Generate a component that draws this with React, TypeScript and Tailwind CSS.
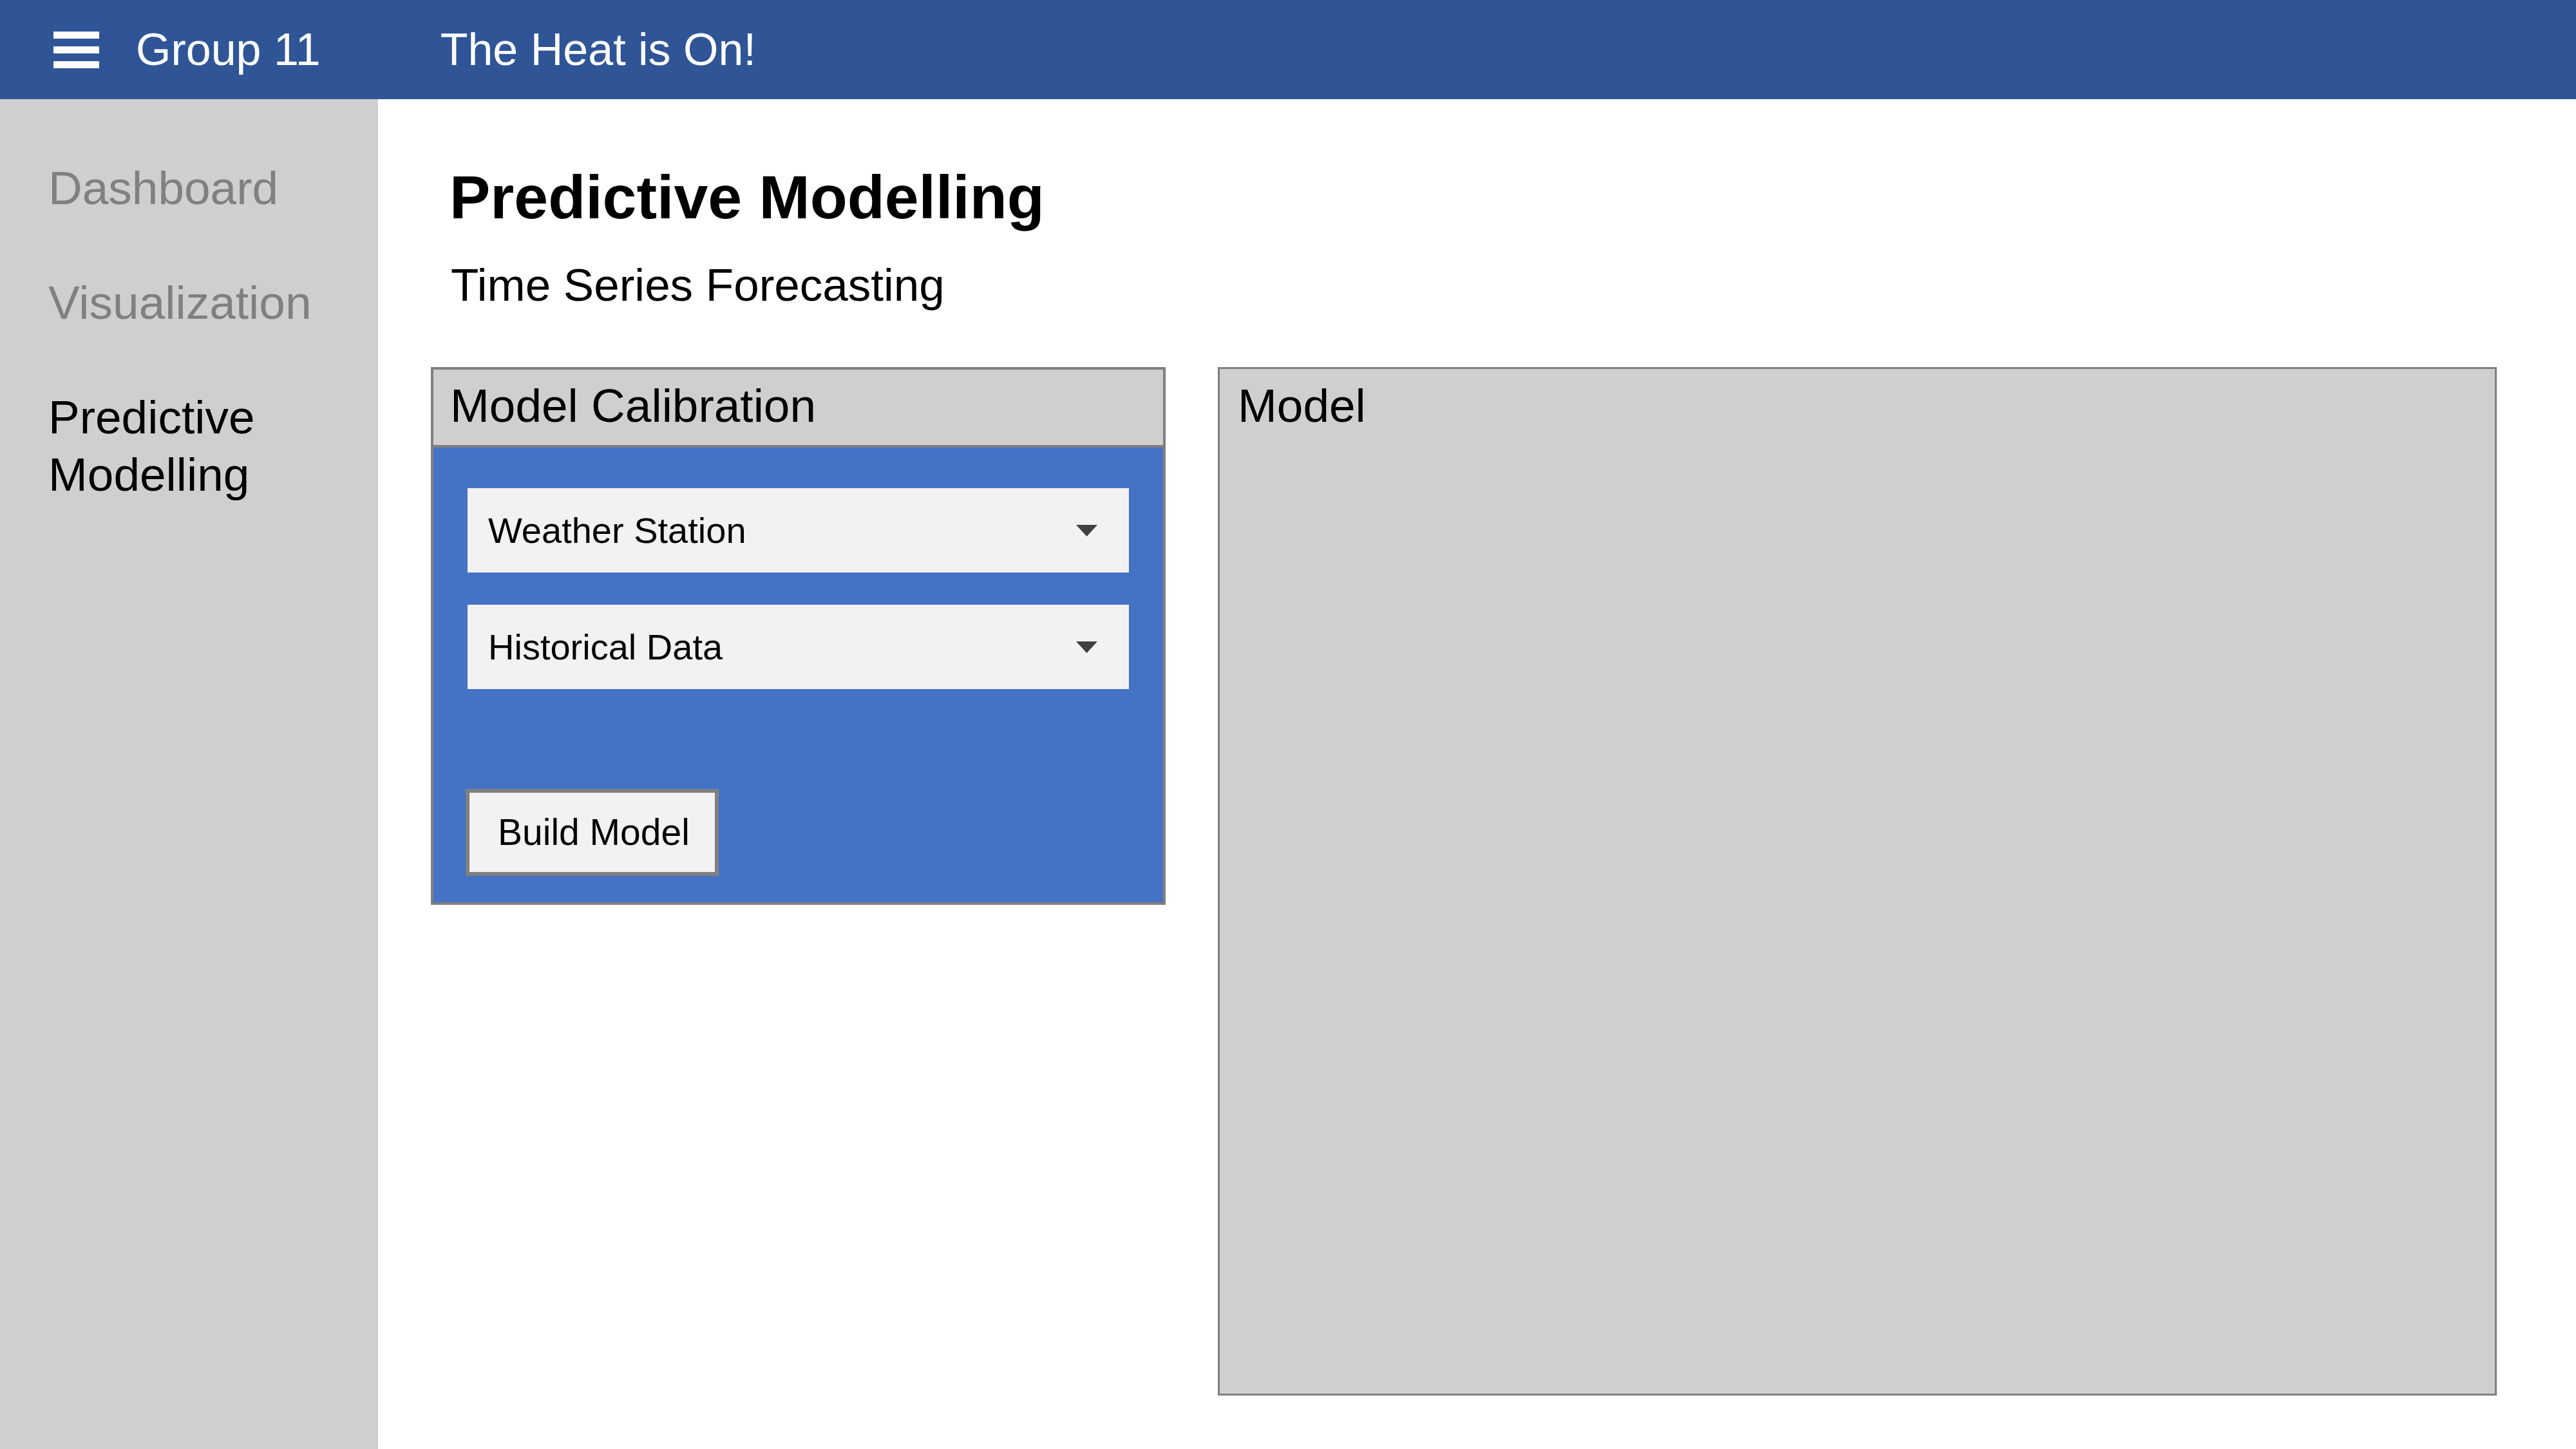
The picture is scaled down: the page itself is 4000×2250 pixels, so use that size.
import React from "react";

const navItems = [
  { label: "Dashboard", active: false },
  { label: "Visualization", active: false },
  { label: "Predictive Modelling", active: true },
];

const Dropdown = ({ label }: { label: string }) => (
  <div className="flex h-[131px] items-center justify-between bg-[#f2f2f2] pl-[32px] pr-[49px] text-[56px] text-black">
    <span>{label}</span>
    <svg width="33" height="18" viewBox="0 0 33 18">
      <polygon points="0,0 33,0 16.5,18" fill="#404040" />
    </svg>
  </div>
);

const App = () => {
  return (
    <div className="flex h-[2250px] w-[4000px] flex-col font-['Liberation_Sans',Arial,sans-serif]">
      <header className="flex h-[154px] shrink-0 items-center bg-[#2f5597] text-[70px] text-white">
        <div className="ml-[83px] flex w-[71px] flex-col gap-[12px]">
          <span className="h-[11px] bg-white" />
          <span className="h-[11px] bg-white" />
          <span className="h-[11px] bg-white" />
        </div>
        <span className="ml-[57px]">Group 11</span>
        <span className="ml-[186px]">The Heat is On!</span>
      </header>

      <div className="flex flex-1">
        <aside className="flex w-[587px] shrink-0 flex-col gap-[89px] bg-[#d0cece] pl-[75px] pt-[93px] text-[73px] leading-[89px]">
          {navItems.map((item, index) => (
            <div key={index} className={item.active ? "text-black" : "text-[#808080]"}>
              {item.label === "Predictive Modelling" ? (
                <>
                  Predictive
                  <br />
                  Modelling
                </>
              ) : (
                item.label
              )}
            </div>
          ))}
        </aside>

        <main className="flex flex-1 flex-col bg-white pl-[82px] pt-[96px]">
          <h1 className="pl-[29px] text-[95px] font-bold leading-[113px] text-black">Predictive Modelling</h1>
          <p className="mt-[38px] pl-[31px] text-[71px] leading-[84px] text-black">Time Series Forecasting</p>

          <div className="mt-[85px] flex items-start gap-[81px] pr-[123px]">
            <section className="w-[1141px] shrink-0 border-[4px] border-[#7f7f7f]">
              <div className="h-[121px] border-b-[4px] border-[#7f7f7f] bg-[#d0cece] pl-[26px] pt-[13px] text-[73px] leading-[86px] text-black">
                Model Calibration
              </div>
              <div className="flex flex-col bg-[#4472c4] px-[53px] pb-[41px] pt-[63px]">
                <Dropdown label="Weather Station" />
                <div className="mt-[50px]">
                  <Dropdown label="Historical Data" />
                </div>
                <button className="-ml-[3px] mt-[155px] flex h-[135px] w-[393px] items-center border-[6px] border-[#808080] bg-[#f2f2f2] pl-[44px] text-[57px] text-black">
                  Build Model
                </button>
              </div>
            </section>

            <section className="h-[1597px] flex-1 border-[3px] border-[#7f7f7f] bg-[#d0cece] pl-[28px] pt-[14px] text-[73px] leading-[86px] text-black">
              Model
            </section>
          </div>
        </main>
      </div>
    </div>
  );
};

export default App;
